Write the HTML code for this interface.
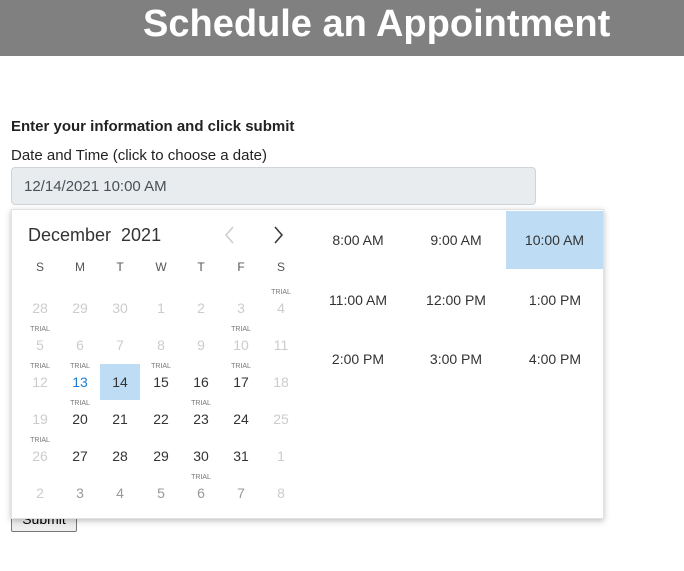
<!DOCTYPE html>
<html><head><style>
body{margin:0;width:684px;height:571px;background:#fff;font-family:"Liberation Sans",sans-serif;position:relative;overflow:hidden}
.hdr{position:absolute;left:0;top:0;width:684px;height:56px;background:#808080}
.hdr h1{position:absolute;left:143px;top:3px;margin:0;color:#fff;font-size:38px;font-weight:bold;white-space:nowrap}
.a{position:absolute;white-space:nowrap}
.pop{position:absolute;left:11px;top:209px;width:593px;height:310px;background:#fff;box-shadow:0 2px 6px rgba(0,0,0,.25);border:1px solid #e2e2e2;box-sizing:border-box}
.c{position:absolute;width:40px;height:37px;text-align:center;font-size:14px;color:#333}
.c span{position:absolute;left:0;right:0;top:10px}
.c i{position:absolute;left:0;right:0;top:-1px;font-style:normal;font-size:7px;color:#777}
.m{color:#ccc}
.t{position:absolute;width:98px;height:58px;text-align:center;line-height:58px;font-size:14px;color:#333}
</style></head><body>
<div class="hdr"><h1>Schedule an Appointment</h1></div>
<div class="a" style="left:11px;top:118px;font-size:15px;font-weight:bold;color:#222">Enter your information and click submit</div>
<div class="a" style="left:11px;top:147px;font-size:15px;color:#222">Date and Time (click to choose a date)</div>
<div class="a" style="left:11px;top:167px;width:523px;height:36px;background:#e9ecef;border:1px solid #ced4da;border-radius:4px;"></div>
<div class="a" style="left:24px;top:178px;font-size:15px;color:#495057">12/14/2021 10:00 AM</div>
<div class="a" style="left:11px;top:507px;width:64px;height:23px;border:1px solid #767676;background:#efefef;border-radius:2px;font-size:14px;text-align:center;line-height:23px">Submit</div>
<div class="pop">
<div class="a" style="left:16px;top:15px;font-size:18px;color:#333">December&nbsp; 2021</div>
<svg class="a" style="left:211px;top:15px" width="14" height="20"><path d="M10 2 L3 10 L10 18" fill="none" stroke="#ccc" stroke-width="1.5"/></svg>
<svg class="a" style="left:259px;top:15px" width="14" height="20"><path d="M4 2 L11 10 L4 18" fill="none" stroke="#333" stroke-width="1.5"/></svg>
<div style="position:absolute;left:0;top:0">
<div class="c" style="left:8px;top:50px;color:#555;font-size:12px">S</div>
<div class="c" style="left:48px;top:50px;color:#555;font-size:12px">M</div>
<div class="c" style="left:88px;top:50px;color:#555;font-size:12px">T</div>
<div class="c" style="left:129px;top:50px;color:#555;font-size:12px">W</div>
<div class="c" style="left:169px;top:50px;color:#555;font-size:12px">T</div>
<div class="c" style="left:209px;top:50px;color:#555;font-size:12px">F</div>
<div class="c" style="left:249px;top:50px;color:#555;font-size:12px">S</div>
</div>
<!-- row1 top 80 -->
<div class="c m" style="left:8px;top:80px"><span>28</span></div>
<div class="c m" style="left:48px;top:80px"><span>29</span></div>
<div class="c m" style="left:88px;top:80px"><span>30</span></div>
<div class="c m" style="left:129px;top:80px"><span>1</span></div>
<div class="c m" style="left:169px;top:80px"><span>2</span></div>
<div class="c m" style="left:209px;top:80px"><span>3</span></div>
<div class="c m" style="left:249px;top:80px"><i>TRIAL</i><span>4</span></div>
<div class="c m" style="left:8px;top:117px"><i>TRIAL</i><span>5</span></div>
<div class="c m" style="left:48px;top:117px"><span>6</span></div>
<div class="c m" style="left:88px;top:117px"><span>7</span></div>
<div class="c m" style="left:129px;top:117px"><span>8</span></div>
<div class="c m" style="left:169px;top:117px"><span>9</span></div>
<div class="c m" style="left:209px;top:117px"><i>TRIAL</i><span>10</span></div>
<div class="c m" style="left:249px;top:117px"><span>11</span></div>
<div class="c m" style="left:8px;top:154px"><i>TRIAL</i><span>12</span></div>
<div class="c" style="left:48px;top:154px;color:#1a7fd4"><i>TRIAL</i><span>13</span></div>
<div class="c" style="left:88px;top:154px;background:#bedcf3;height:36px"><span>14</span></div>
<div class="c" style="left:129px;top:154px"><i>TRIAL</i><span>15</span></div>
<div class="c" style="left:169px;top:154px"><span>16</span></div>
<div class="c" style="left:209px;top:154px"><i>TRIAL</i><span>17</span></div>
<div class="c m" style="left:249px;top:154px"><span>18</span></div>
<div class="c m" style="left:8px;top:191px"><span>19</span></div>
<div class="c" style="left:48px;top:191px"><i>TRIAL</i><span>20</span></div>
<div class="c" style="left:88px;top:191px"><span>21</span></div>
<div class="c" style="left:129px;top:191px"><span>22</span></div>
<div class="c" style="left:169px;top:191px"><i>TRIAL</i><span>23</span></div>
<div class="c" style="left:209px;top:191px"><span>24</span></div>
<div class="c m" style="left:249px;top:191px"><span>25</span></div>
<div class="c m" style="left:8px;top:228px"><i>TRIAL</i><span>26</span></div>
<div class="c" style="left:48px;top:228px"><span>27</span></div>
<div class="c" style="left:88px;top:228px"><span>28</span></div>
<div class="c" style="left:129px;top:228px"><span>29</span></div>
<div class="c" style="left:169px;top:228px"><span>30</span></div>
<div class="c" style="left:209px;top:228px"><span>31</span></div>
<div class="c m" style="left:249px;top:228px"><span>1</span></div>
<div class="c m" style="left:8px;top:265px"><span>2</span></div>
<div class="c" style="left:48px;top:265px;color:#999"><span>3</span></div>
<div class="c" style="left:88px;top:265px;color:#999"><span>4</span></div>
<div class="c" style="left:129px;top:265px;color:#999"><span>5</span></div>
<div class="c" style="left:169px;top:265px;color:#999"><i>TRIAL</i><span>6</span></div>
<div class="c" style="left:209px;top:265px;color:#999"><span>7</span></div>
<div class="c m" style="left:249px;top:265px"><span>8</span></div>
<div class="t" style="left:297px;top:1px">8:00 AM</div>
<div class="t" style="left:395px;top:1px">9:00 AM</div>
<div class="t" style="left:494px;top:1px;background:#bedcf3;width:97px">10:00 AM</div>
<div class="t" style="left:297px;top:61px">11:00 AM</div>
<div class="t" style="left:395px;top:61px">12:00 PM</div>
<div class="t" style="left:494px;top:61px">1:00 PM</div>
<div class="t" style="left:297px;top:120px">2:00 PM</div>
<div class="t" style="left:395px;top:120px">3:00 PM</div>
<div class="t" style="left:494px;top:120px">4:00 PM</div>
</div>
</body></html>
